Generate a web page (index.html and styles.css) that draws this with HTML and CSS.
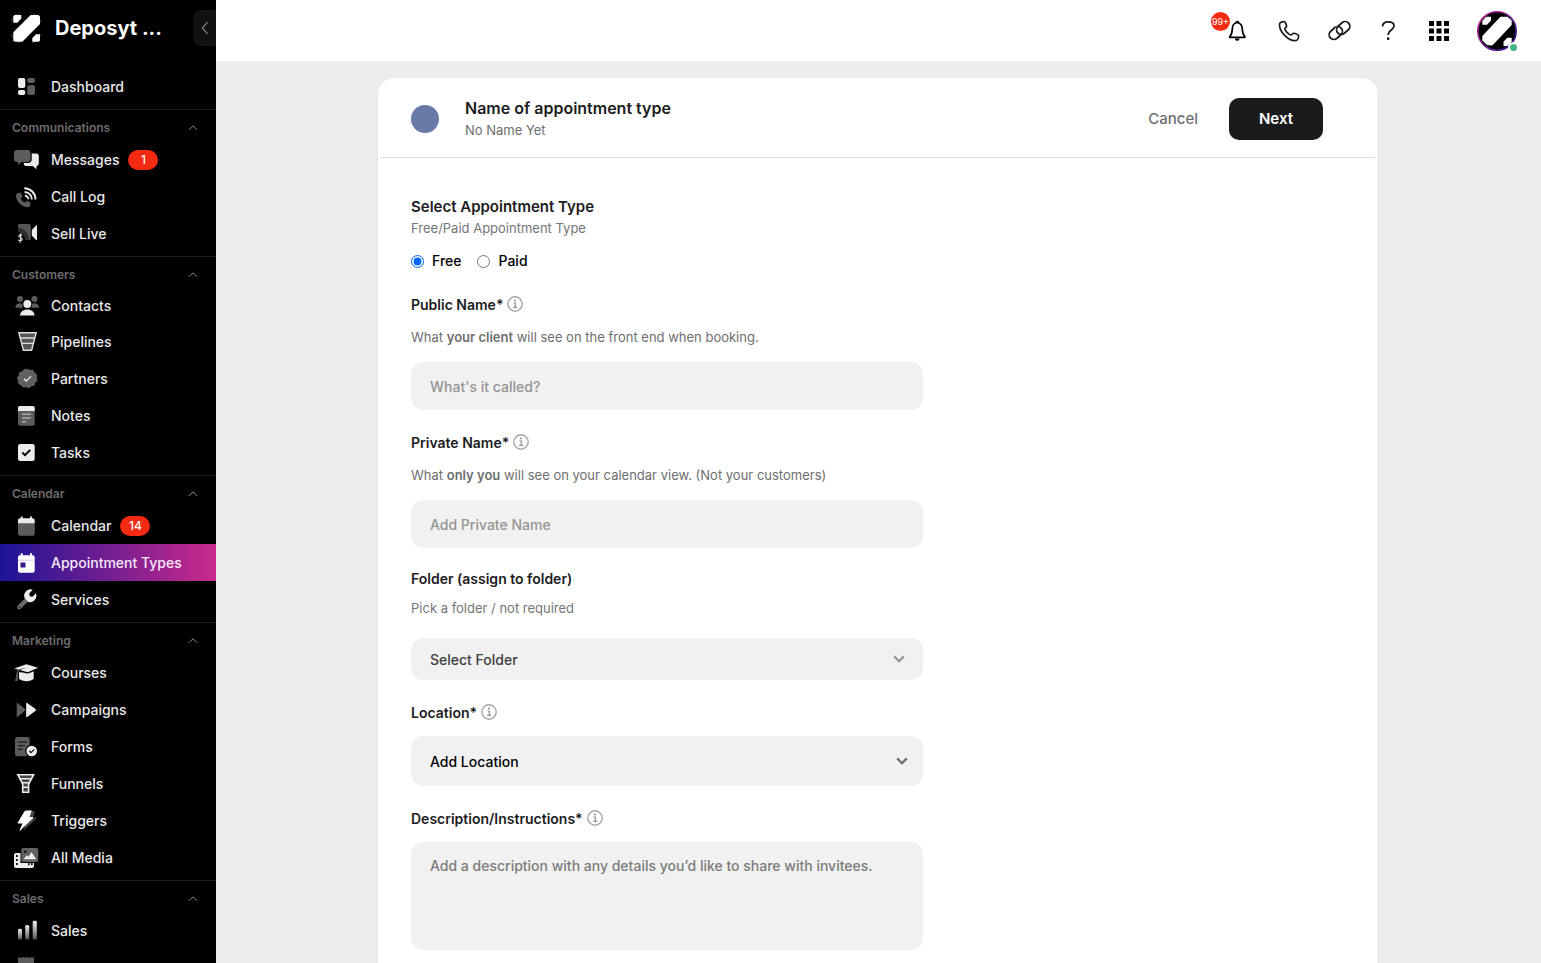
FILE: index.html
```html
<!DOCTYPE html>
<html lang="en">
<head>
<meta charset="utf-8">
<title>Appointment Types</title>
<link rel="stylesheet" href="styles.css">
</head>
<body>
<svg class="defs" aria-hidden="true">
  <defs>
    <linearGradient id="bar" x1="0" y1="0" x2="0" y2="1"><stop offset="0" stop-color="#f2f2f2"/><stop offset="1" stop-color="#555"/></linearGradient>
    <symbol id="chev-up" viewBox="0 0 10 6"><path d="M1 4.800 5 .8 9 4.800" fill="none" stroke="#8c8c8c" stroke-width="1"/></symbol>
    <symbol id="chev-down" viewBox="0 0 12 8"><path d="M1.200 1.400 6 6.200 10.800 1.400" fill="none" stroke="currentColor" stroke-width="2.200"/></symbol>
    <symbol id="info" viewBox="0 0 16 16"><circle cx="8" cy="8" r="7.200" fill="none" stroke="#a6a6a6" stroke-width="1.400"/><path d="M6.400 7h1.900v4.200M6.200 11.300h4" fill="none" stroke="#8f8f8f" stroke-width="1.200"/><circle cx="7.900" cy="4.600" r="1" fill="#8f8f8f"/></symbol>
  </defs>
</svg>
<div class="app">
  <aside class="sidebar">
    <div class="brand">
      <svg class="brand-logo" viewBox="0 0 34 34" aria-hidden="true"><circle cx="17" cy="17" r="16.300" fill="none" stroke="#5a5a5a" stroke-width=".8" stroke-dasharray="12 13.600" stroke-dashoffset="-6.800"/><path d="M21.700 4h7.800L31 5.500V13L13.300 30.700H5.800L4.300 29.200V21.300z" fill="#fff"/><path d="M5.500 4h6.800v3.500l-4 4.200h-4V5.200zM31 23.300v6.200l-1.200 1.200h-6.500V27l3.700-3.700z" fill="#fff"/></svg>
      <span class="brand-name">Deposyt ...</span>
      <button class="collapse" type="button" aria-label="Collapse menu"><svg width="8" height="14" viewBox="0 0 8 14"><path d="M6.500 1 1.500 7l5 6" fill="none" stroke="#9a9a9a" stroke-width="1.100"/></svg></button>
    </div>
    <nav class="nav" aria-label="Main">
      <div class="group group-first">
        <a class="item" href="#"><svg class="icon" viewBox="0 0 26 22"><g fill="#ececec"><rect x="4" y="2" width="7.300" height="10" rx="2"/><rect x="4" y="14" width="7.300" height="5" rx="2"/></g><g fill="#5e5e5e"><rect x="13.300" y="2" width="7.700" height="5" rx="2"/><rect x="13.300" y="9.300" width="7.700" height="9.700" rx="2"/></g></svg>Dashboard</a>
      </div>
      <div class="group">
        <button class="group-title" type="button">Communications<svg class="chev" ><use href="#chev-up"/></svg></button>
        <a class="item" href="#"><svg class="icon" viewBox="0 0 26 22"><path d="M3 1h10.500a3 3 0 0 1 3 3v6a3 3 0 0 1-3 3H7.500L4 16v-3H3a3 3 0 0 1-3-3V4a3 3 0 0 1 3-3z" fill="#5c5c5c"/><path d="M18.500 4.500H22a2.800 2.800 0 0 1 2.800 2.800v7a2.800 2.800 0 0 1-2.300 2.800V20.300l-3.800-3.200H12.500a2.800 2.800 0 0 1-2.800-2.800V14h4a4 4 0 0 0 4-4V4.500z" fill="#ececec"/></svg>Messages<span class="badge">1</span></a>
        <a class="item" href="#"><svg class="icon" viewBox="0 0 26 22"><path d="M3.200 7.600 5.600 6.800c.7-.2 1.300.1 1.600.8l1 2.400c.2.600.1 1.200-.4 1.600l-1.200 1c.9 1.800 2.300 3.200 4.100 4.100l1-1.200c.4-.5 1-.7 1.600-.4l2.400 1c.7.300 1 .9.800 1.600l-.7 2.300c-.2.700-.7 1.200-1.400 1.200C7.700 21.200 2 15.600 2 9c0-.700.5-1.200 1.200-1.400z" fill="#5c5c5c"/><g fill="none" stroke="#ececec" stroke-width="1.900"><path d="M10.300 2.200A11.200 11.200 0 0 1 21.500 13.400M10.600 6A7.300 7.300 0 0 1 17.800 13.400M10.900 9.700a3.600 3.600 0 0 1 3.500 3.600"/></g></svg>Call Log</a>
        <a class="item" href="#"><svg class="icon" viewBox="0 0 26 22"><path d="M5 1h10a1.800 1.800 0 0 1 1.800 1.800v12.400A1.800 1.800 0 0 1 15 17h-3A8 8 0 0 0 4 8V2z" fill="#565656"/><path d="M4 4.500A12 12 0 0 1 15 17h-4A8 8 0 0 0 4 8.500z" fill="#303030"/><path d="M17.800 7 22 2.500c.4-.4 1-.2 1 .4v13.600c0 .6-.6.800-1 .4L17.800 12.500z" fill="#ececec"/><path d="M8.300 12.300c-.8-.8-3.600-.7-3.500.9.100 1.700 3.600 1 3.500 2.900-.1 1.600-2.900 1.800-4 .7M6.900 10.300l-.8 9.700" fill="none" stroke="#ddd" stroke-width="1.100"/></svg>Sell Live</a>
      </div>
      <div class="group">
        <button class="group-title" type="button">Customers<svg class="chev"><use href="#chev-up"/></svg></button>
        <a class="item item-short" href="#"><svg class="icon" viewBox="0 0 26 22"><g fill="#5c5c5c"><circle cx="6" cy="4" r="3"/><circle cx="20.400" cy="4" r="3"/><path d="M1.300 12.700c0-2.700 2-4.400 4.700-4.400.9 0 1.600.2 2.300.500-.2 1.500.1 2.700.8 3.900zM25.100 12.700c0-2.700-2-4.400-4.700-4.400-.9 0-1.600.2-2.300.500.2 1.500-.1 2.700-.8 3.900z"/></g><circle cx="13.300" cy="9" r="4" fill="#ececec"/><path d="M6 20.600c0-3.700 3.200-6.200 7.300-6.200s7.300 2.500 7.300 6.200z" fill="#ececec"/></svg>Contacts</a>
        <a class="item" href="#"><svg class="icon" viewBox="0 0 26 22"><path d="M4.800 1.700h17.400L17.600 19.300H9.400z" fill="#565656" stroke="#dedede" stroke-width="1.400"/><path d="M6 7h15M7.400 12.400h12" stroke="#dedede" stroke-width="1.300"/></svg>Pipelines</a>
        <a class="item" href="#"><svg class="icon" viewBox="0 0 26 22"><path d="m13.300 1.200 2.700 1.300 3-.2 1.300 2.600 2.400 1.800-.3 3 .7 2.800-2.200 2-.9 2.800-2.900.6-2.300 1.900-2.800-1-2.800.3-1.900-2.200-2.600-1.300-.1-3-1.200-2.700 1.700-2.300.4-2.900 2.800-.9 2-2.200z" fill="#606060" stroke="#606060" stroke-linejoin="round"/><path d="m10 10.800 2.300 2.300 4.600-4.700" fill="none" stroke="#f2f2f2" stroke-width="1.300"/></svg>Partners</a>
        <a class="item" href="#"><svg class="icon" viewBox="0 0 26 22"><rect x="4" y="1" width="16.700" height="19.700" rx="2" fill="#5c5c5c"/><path d="M4 6V3a2 2 0 0 1 2-2h12.700a2 2 0 0 1 2 2v3z" fill="#ececec"/><path d="M8 9.200h9M8 13h9M8 16.800h4.200" stroke="#d0d0d0" stroke-width="1"/></svg>Notes</a>
        <a class="item" href="#"><svg class="icon" viewBox="0 0 26 22"><rect x="4" y="2" width="16.700" height="17" rx="2.200" fill="#ececec"/><path d="m8.300 10.500 2.700 2.700 5.300-5.400" fill="none" stroke="#000" stroke-width="1.900"/></svg>Tasks</a>
      </div>
      <div class="group">
        <button class="group-title" type="button">Calendar<svg class="chev"><use href="#chev-up"/></svg></button>
        <a class="item" href="#"><svg class="icon" viewBox="0 0 26 22"><path d="M4 8h16.700v10.700a2 2 0 0 1-2 2H6a2 2 0 0 1-2-2z" fill="#5c5c5c"/><path d="M6 3.300h.8V1.500h1.900v1.800H16V1.500h1.900v1.800h.8a2 2 0 0 1 2 2v2.900H4V5.300a2 2 0 0 1 2-2z" fill="#ececec"/></svg>Calendar<span class="badge">14</span></a>
        <a class="item item-active" href="#" aria-current="page"><svg class="icon" viewBox="0 0 26 22"><path d="M6 3.300h.8V1.300h1.900v2H16v-2h1.900v2h.8a2 2 0 0 1 2 2v13.400a2 2 0 0 1-2 2H6a2 2 0 0 1-2-2V5.300a2 2 0 0 1 2-2z" fill="#fff"/><path d="M4 8.200h16.700" stroke="#c9b8e2" stroke-width=".8"/><rect x="6.500" y="10.500" width="5" height="5" fill="#3a178f"/></svg>Appointment Types</a>
        <a class="item" href="#"><svg class="icon" viewBox="0 0 26 22"><path d="m11 9.500 3 3-7.400 7.300a2.200 2.200 0 0 1-3.100-3.100z" fill="#6a6a6a"/><circle cx="5.300" cy="18.100" r=".8" fill="#111"/><path d="M18.800.8a6.300 6.300 0 0 0-7.900 8.800l3.300 3.300a6.300 6.300 0 0 0 7.600-8.600l-3.200 3.400-2.800-.5-.5-2.900z" fill="#ececec"/></svg>Services</a>
      </div>
      <div class="group">
        <button class="group-title" type="button">Marketing<svg class="chev"><use href="#chev-up"/></svg></button>
        <a class="item" href="#"><svg class="icon" viewBox="0 0 26 22"><path d="M.3 6.600 12.300 2.200 24 5.800 13.800 10.200z" fill="#ececec"/><path d="M5 10.300c3.500-.6 6 1 8.300 1.300 2.300-.1 4-1.600 6.400-2.300v7.500c-2.700 3.300-11.400 3.300-14.700 0z" fill="#ececec"/><path d="M12.500 5.500 4 7.500c-1.700 1.600-1.600 7.500-3 11.500h2.600c.3-3.500.1-7.500 1.100-10.300z" fill="#5c5c5c"/></svg>Courses</a>
        <a class="item" href="#"><svg class="icon" viewBox="0 0 26 22"><path d="M3.200 4.300 10.500 10c.7.500.7 1.200 0 1.700l-7.300 6z" fill="#5c5c5c" stroke="#5c5c5c" stroke-linejoin="round"/><path d="M12.700 4.200 21 10.100c.7.500.7 1.200 0 1.700l-8.300 6z" fill="#ececec" stroke="#ececec" stroke-linejoin="round"/></svg>Campaigns</a>
        <a class="item" href="#"><svg class="icon" viewBox="0 0 26 22"><rect x="1" y="1" width="14.700" height="19.300" rx="2.500" fill="#5c5c5c"/><path d="M4 6h9M4 9.700h7M4 13.400h4.500" stroke="#111" stroke-width="1.100"/><circle cx="17.700" cy="15" r="6.500" fill="#000"/><circle cx="17.700" cy="15" r="5.300" fill="#ececec"/><path d="m15.300 15 1.700 1.600 3.200-3.200" fill="none" stroke="#111" stroke-width="1.300"/></svg>Forms</a>
        <a class="item" href="#"><svg class="icon" viewBox="0 0 26 22"><path d="M3.800 1.700h15.800l-5 9.300v8.300H8.700V11z" fill="#454545" stroke="#ececec" stroke-width="1.600"/><path d="M5.500 5.800h12.500M7.600 9.700h8.200M9 14.300h5.300" stroke="#ececec" stroke-width="1.400"/></svg>Funnels</a>
        <a class="item" href="#"><svg class="icon" viewBox="0 0 26 22"><path d="M16 1h5l-1.800 6.700H23L9.500 20.500l3-9z" fill="#454545"/><path d="M11 1.200 17.200 .8 14.800 7.600h4.200L6 20.300l3.200-7.300H4z" fill="#fff" stroke="#fff" stroke-linejoin="round"/></svg>Triggers</a>
        <a class="item" href="#"><svg class="icon" viewBox="0 0 26 22"><path d="M2 6h4.500v10H20v3a2 2 0 0 1-2 2H2a2 2 0 0 1-2-2V8a2 2 0 0 1 2-2z" fill="#ececec"/><path d="M2 8h1.800v2H2zM2 12h1.800v2H2zM2 16h1.800v2H2zM14 16h1.600v2.300H14zM17 16h1.600v2.300H17z" fill="#111"/><rect x="7.300" y="1" width="16.900" height="14" rx="2" fill="#626262"/><circle cx="11.200" cy="4.700" r="1.300" fill="#111"/><path d="m9.500 12.300 3.300-4 1.700 1.400 3-4.700 4.700 7.300z" fill="#ececec"/></svg>All Media</a>
      </div>
      <div class="group">
        <button class="group-title" type="button">Sales<svg class="chev"><use href="#chev-up"/></svg></button>
        <a class="item" href="#"><svg class="icon" viewBox="0 0 26 22"><g fill="url(#bar)"><rect x="4" y="8.700" width="4" height="10.800" rx="1.500"/><rect x="11.200" y="5" width="4" height="14.500" rx="1.500"/><rect x="18.700" y=".800" width="4.200" height="18.700" rx="1.500"/></g></svg>Sales</a>
        <a class="item" href="#" aria-label="Invoices"><svg class="icon" viewBox="0 0 26 22"><path d="M4 1l1.500-1L7 1l2-1 2 1 2-1 2 1 2-1 1.500 1L20 0v20H4z" fill="#5c5c5c"/></svg></a>
      </div>
    </nav>
  </aside>

  <div class="page">
    <header class="topbar">
      <button class="tool" type="button" aria-label="Notifications"><svg width="24" height="24" viewBox="0 0 24 24"><path d="M10 3.500C6.800 4.200 5.300 6.700 5.300 10c0 3.800-.7 5.600-2.600 7.700v.6h15.200v-.6c-1.900-2.100-2.600-3.900-2.600-7.700 0-3.300-1.800-5.800-5-6.500z" fill="none" stroke="#000" stroke-width="1.700" stroke-linejoin="round"/><path d="M8.200 3.900a2.100 2.100 0 0 1 4.200 0zM7.800 19.500h4.800a2.400 2.200 0 0 1-4.800 0z"/></svg><span class="count">99+</span></button>
      <button class="tool" type="button" aria-label="Phone"><svg width="24" height="24" viewBox="0 0 24 24"><path d="M2.600 4.700C3 3.300 5.700 2.500 7.300 2.600c.9.100 1.900 2.700 2.300 4.300.3 1.400-1.700 2-1.800 3.200 0 1.300 4.500 5.900 6.100 5.900 1.200 0 1.900-2.100 3.400-1.700 1.500.4 4.200 1.600 4.300 2.500.1 1.600-.8 4.300-2.400 4.700C11.700 22.700 1.300 12 2.600 4.700z" fill="none" stroke="#1c1c1c" stroke-width="1.700"/></svg></button>
      <button class="tool" type="button" aria-label="Links"><svg width="24" height="24" viewBox="0 0 24 24"><g fill="none"><rect x="1.500" y="9.300" width="14.600" height="9.400" rx="4.700" transform="rotate(-42 8.800 14)" stroke="#1c1c1c" stroke-width="1.800"/><path d="M11 14.500A4.700 4.700 0 0 1 11 8.500" stroke="#fff" stroke-width="4"/><rect x="8.900" y="4.300" width="14.600" height="9.400" rx="4.700" transform="rotate(-42 16.200 9)" stroke="#1c1c1c" stroke-width="1.800"/></g></svg></button>
      <button class="tool" type="button" aria-label="Help"><svg width="24" height="24" viewBox="0 0 24 24"><path d="M5.600 7.500c0-3 2-4.600 5.700-4.600 4 0 5.700 1.500 5.700 4.200 0 4.200-5.800 3.800-5.800 8.900" fill="none" stroke="#1c1c1c" stroke-width="1.800"/><rect x="10" y="18.500" width="2.300" height="2.300"/></svg></button>
      <button class="tool" type="button" aria-label="Apps"><svg width="24" height="24" viewBox="0 0 24 24"><path d="M2 2h5v5H2zM9.500 2h5v5h-5zM17 2h5v5h-5zM2 9.500h5v5H2zM9.500 9.500h5v5h-5zM17 9.500h5v5h-5zM2 17h5v5H2zM9.500 17h5v5h-5zM17 17h5v5h-5z"/></svg></button>
      <button class="avatar" type="button" aria-label="Account"><svg width="40" height="40" viewBox="0 0 40 40"><defs><linearGradient id="ring" x1="0" y1="0" x2="1" y2="1"><stop offset="0" stop-color="#cf2a8e"/><stop offset="1" stop-color="#1f1499"/></linearGradient></defs><circle cx="20" cy="20" r="19.200" fill="#000" stroke="url(#ring)" stroke-width="1.600"/><path d="M23.500 5.700h7L34.700 9.500V14L15.300 34.500 10 34 5.300 29.500V25z" fill="#fff"/><path d="M5.300 10 9 5.700h5V9.500l-4 4.300H5.300zM34.700 27.300v3.500L30.500 35h-4v-4.300l3.700-3.900h4.500z" fill="#fff"/></svg><span class="status"></span></button>
    </header>

    <main class="content">
      <form class="card">
        <div class="card-head">
          <span class="swatch"></span>
          <div class="heading">
            <h1 class="title">Name of appointment type</h1>
            <p class="subtitle">No Name Yet</p>
          </div>
          <button class="cancel" type="button">Cancel</button>
          <button class="next" type="submit">Next</button>
        </div>
        <div class="card-body">
          <fieldset class="types">
            <legend class="types-title">Select Appointment Type</legend>
            <p class="types-note">Free/Paid Appointment Type</p>
            <div class="radios">
              <label class="radio"><input type="radio" name="kind" checked>Free</label>
              <label class="radio"><input type="radio" name="kind">Paid</label>
            </div>
          </fieldset>

          <div class="field">
            <div class="label-row"><label for="public">Public Name*</label><svg class="info"><use href="#info"/></svg></div>
            <p class="help">What <b>your client</b> will see on the front end when booking.</p>
            <input class="control" id="public" type="text" placeholder="What's it called?">
          </div>
          <div class="field">
            <div class="label-row"><label for="private">Private Name*</label><svg class="info"><use href="#info"/></svg></div>
            <p class="help">What <b>only you</b> will see on your calendar view. (Not your customers)</p>
            <input class="control" id="private" type="text" placeholder="Add Private Name">
          </div>
          <div class="field field-folder">
            <div class="label-row"><label for="folder">Folder (assign to folder)</label></div>
            <p class="help">Pick a folder / not required</p>
            <div class="select select-folder"><select class="control" id="folder"><option>Select Folder</option></select><svg class="arrow"><use href="#chev-down"/></svg></div>
          </div>
          <div class="field">
            <div class="label-row"><label for="location">Location*</label><svg class="info"><use href="#info"/></svg></div>
            <div class="select select-location"><select class="control" id="location"><option>Add Location</option></select><svg class="arrow"><use href="#chev-down"/></svg></div>
          </div>
          <div class="field">
            <div class="label-row"><label for="description">Description/Instructions*</label><svg class="info"><use href="#info"/></svg></div>
            <textarea class="control control-area" id="description" placeholder="Add a description with any details you’d like to share with invitees."></textarea>
          </div>
        </div>
      </form>
    </main>
  </div>
</div>
</body>
</html>
```
FILE: styles.css
```css
* { box-sizing: border-box; }
body { margin: 0; font-family: Inter, "Liberation Sans", sans-serif; font-size: 14px; color: #1c1c1e; }
button, input, select, textarea { font: inherit; color: inherit; border: 0; background: none; padding: 0; margin: 0; }
h1, p, fieldset, legend { margin: 0; padding: 0; border: 0; }
.defs { position: absolute; width: 0; height: 0; }

.app { display: flex; height: 100vh; overflow: hidden; }

/* Sidebar */
.sidebar { flex: 0 0 216px; background: #000; overflow: hidden; }
.brand { display: flex; align-items: center; height: 56px; padding-left: 9px; margin-bottom: 12px; }
.brand-logo { width: 34px; height: 34px; flex: none; }
.brand-name { flex: 1; margin-left: 12px; font-size: 20px; font-weight: 700; line-height: 24px; color: #fff; }
.collapse { display: flex; align-items: center; justify-content: center; width: 23px; height: 36px; background: #111; border-radius: 8px 0 0 8px; }
.group { border-top: 1px solid #1d1d1d; padding-bottom: 4px; }
.group-first { border-top: 0; }
.group-title { display: flex; align-items: center; justify-content: space-between; width: 100%; height: 31px; padding: 4px 18px 0 12px; font-size: 12px; font-weight: 600; line-height: 16px; color: #6c6c6c; }
.chev { width: 10px; height: 6px; }
.item { display: flex; align-items: center; height: 37px; padding-left: 14px; font-size: 14px; font-weight: 500; line-height: 20px; color: #e8e8e8; text-decoration: none; }
.item-short { height: 35px; }
.item-active { background: linear-gradient(90deg, #1c1496, #c9298b); color: #f4e9fa; }
.icon { width: 26px; height: 22px; margin-right: 11px; flex: none; }
.badge { min-width: 30px; height: 20px; margin-left: 9px; border-radius: 10px; background: #f42a12; color: #fff; font-size: 12px; line-height: 20px; text-align: center; }

/* Top bar */
.page { flex: 1; min-width: 0; display: flex; flex-direction: column; background: #ededef; }
.topbar { flex: none; display: flex; align-items: center; justify-content: flex-end; gap: 26px; height: 61px; padding-right: 24px; background: #fff; }
.tool { position: relative; display: flex; width: 24px; height: 24px; }
.count { position: absolute; top: -7px; left: -16px; width: 19px; height: 19px; border-radius: 50%; background: #f42a12; color: #fff; font-size: 9px; line-height: 19px; text-align: center; }
.avatar { position: relative; display: flex; width: 40px; height: 40px; }
.status { position: absolute; right: -2px; bottom: -2px; width: 11px; height: 11px; border: 2px solid #fff; border-radius: 50%; background: #43b581; }

/* Card */
.content { flex: 1; min-height: 0; overflow: hidden; padding: 17px 25px 0 24px; }
.card { width: 100%; max-width: 1000px; min-height: 100%; margin: 0 auto; padding: 0 3px; background: #fff; border-radius: 16px; box-shadow: 0 1px 2px rgba(0, 0, 0, .12); }
.card-head { display: flex; align-items: center; height: 80px; padding: 2px 52px 0 30px; border-bottom: 1px solid #dcdcde; }
.swatch { width: 28px; height: 28px; margin-right: 26px; border-radius: 50%; background: #6a7aa8; }
.heading { flex: 1; }
.title { font-size: 16px; font-weight: 600; line-height: 22px; }
.subtitle { font-size: 13px; line-height: 22px; color: #6e6e70; }
.cancel { margin-right: 31px; font-size: 15px; font-weight: 500; color: #6e6e70; }
.next { width: 94px; height: 42px; border-radius: 10px; background: #1b1b1d; color: #fff; font-size: 15px; font-weight: 600; }

.card-body { padding: 38px 30px 40px; }
.types { margin-bottom: 22px; }
.types-title { font-size: 15px; font-weight: 600; line-height: 22px; }
.types-note { font-size: 13px; line-height: 20px; color: #757577; }
.radios { display: flex; gap: 16px; margin-top: 13px; }
.radio { display: flex; align-items: center; font-weight: 500; line-height: 20px; color: #000; }
.radio input { width: 13px; height: 13px; margin-right: 8px; accent-color: #0068ff; }

.field { display: flex; flex-direction: column; width: 100%; max-width: 512px; }
.field + .field { margin-top: 21px; }
.label-row { display: flex; align-items: center; height: 24px; font-size: 14px; font-weight: 600; line-height: 20px; }
.info { width: 16px; height: 16px; margin: 0 0 2px 4px; }
.help { margin: 10px 0 15px; font-size: 13px; line-height: 20px; color: #6e6e70; }
.help b { font-weight: 600; }
.control { width: 100%; height: 48px; padding: 0 19px; border-radius: 12px; background: #f1f1f1; font-weight: 500; }
.control::placeholder { color: #949494; opacity: 1; }
.control-area { display: block; height: 108px; margin-top: 11px; padding: 14px 19px; line-height: 20px; resize: none; }
.control-area::placeholder { color: #7c7c7c; }
.field + .field-folder { margin-top: 19px; }
.field-folder .help { margin: 7px 0 20px; color: #757577; }
.select { display: grid; align-items: center; }
.select > * { grid-area: 1 / 1; }
.select select { appearance: none; }
.arrow { justify-self: end; width: 12px; height: 8px; margin-right: 15px; color: #6e6e70; pointer-events: none; }
.select-folder select { height: 42px; color: #3e3e40; }
.select-folder .arrow { margin-right: 18px; color: #949494; }
.select-location { margin-top: 11px; }
.select-location select { height: 50px; color: #000; }
```
